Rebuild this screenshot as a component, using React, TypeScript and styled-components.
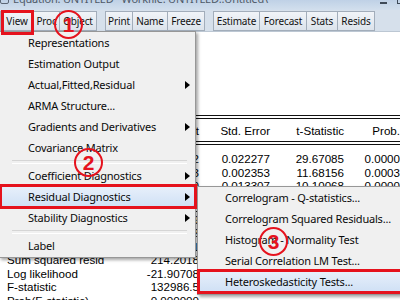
import React from "react";
import styled, { createGlobalStyle, css } from "styled-components";

const RED = "#e5121d";

const GlobalStyle = createGlobalStyle`
  html, body { margin: 0; padding: 0; background: #ffffff; }
  body { width: 400px; height: 300px; overflow: hidden; }
  * { box-sizing: border-box; }
`;

const Screen = styled.div`
  position: relative;
  width: 400px;
  height: 300px;
  overflow: hidden;
  display: flex;
  flex-direction: column;
  background: #ffffff;
`;

/* ---------- title bar ---------- */
const TitleBar = styled.div`
  flex: none;
  height: 10px;
  overflow: hidden;
  display: flex;
  align-items: flex-start;
  background: linear-gradient(#bfd1e6, #d2dfed);
  font-family: "Noto Sans", sans-serif;
  font-size: 11px;
  letter-spacing: -0.2px;
  color: #4f5a68;
`;

const TitleIcon = styled.span`
  flex: none;
  width: 9px;
  height: 12px;
  margin-top: -8px;
  border: 1px solid #5b6675;
  border-radius: 2px;
`;

const TitleText = styled.span`
  margin: -9px 0 0 4px;
  line-height: 16px;
  white-space: pre;
`;

const TitleControls = styled.div`
  margin-left: auto;
  display: flex;
  gap: 10px;
  align-items: flex-start;
`;

const MinGlyph = styled.span`
  width: 7px;
  height: 2px;
  margin-top: 2px;
  background: #3e4a58;
`;

const MaxGlyph = styled.span`
  width: 8px;
  height: 10px;
  margin-top: -6px;
  margin-right: -5px;
  border: 1px solid #3e4a58;
  border-top-width: 2px;
`;

/* ---------- toolbar ---------- */
const Toolbar = styled.div`
  flex: none;
  height: 22px;
  display: flex;
  align-items: center;
  background: #d6e0eb;
  border-bottom: 1px solid #bcc7d3;
  font-family: "Noto Sans", sans-serif;
  font-size: 10px;
  letter-spacing: -0.15px;
  color: #111;
`;

const ButtonGroup = styled.div`
  display: flex;
  & + & {
    margin-left: 8px;
  }
`;

const ToolButton = styled.div<{ $w: number; $marked?: boolean }>`
  position: relative;
  width: ${(p) => p.$w}px;
  height: 20px;
  display: flex;
  align-items: center;
  justify-content: center;
  white-space: nowrap;
  background: linear-gradient(#f1f4f8, #dce3eb);
  border: 1px solid #a2adba;
  & + & {
    margin-left: -1px;
  }
  ${(p) =>
    p.$marked &&
    css`
      &::after {
        content: "";
        position: absolute;
        left: 0;
        right: -1px;
        top: -2px;
        bottom: -5px;
        border: 3px solid ${RED};
        z-index: 10;
      }
    `}
`;

/* ---------- output ---------- */
const Output = styled.div`
  flex: 1;
  padding: 8px 0 0 7px;
  font-family: "Liberation Sans", Arial, sans-serif;
  font-size: 11.6px;
  line-height: 13.5px;
  color: #000;
`;

const InfoLine = styled.div`
  white-space: pre;
`;

const DoubleRule = styled.div<{ $mt: number; $mb: number }>`
  height: 4px;
  margin: ${(p) => p.$mt}px 0 ${(p) => p.$mb}px -4px;
  border-top: 1px solid #111;
  border-bottom: 1px solid #111;
`;

const TableRow = styled.div`
  display: grid;
  grid-template-columns: 120px 72px 71px 74px 56px;
  white-space: nowrap;
`;

const StatsRow = styled.div`
  display: grid;
  grid-template-columns: 120px 72px 150px 57px;
  white-space: nowrap;
`;

const Cell = styled.span<{ $right?: boolean; $pl?: number }>`
  text-align: ${(p) => (p.$right ? "right" : "left")};
  padding-left: ${(p) => p.$pl ?? 0}px;
`;

/* ---------- menus ---------- */
const Menu = styled.div<{ $left: number; $top: number; $width: number; $z: number; $pb: number }>`
  position: absolute;
  left: ${(p) => p.$left}px;
  top: ${(p) => p.$top}px;
  width: ${(p) => p.$width}px;
  z-index: ${(p) => p.$z};
  padding-bottom: ${(p) => p.$pb}px;
  background: #f0f0f0;
  border: 1px solid #979797;
  box-shadow: 2px 2px 3px rgba(0, 0, 0, 0.35);
  font-family: "Noto Sans", sans-serif;
  font-size: 11px;
  letter-spacing: -0.2px;
  color: #0a0a0a;
`;

const MenuItem = styled.div<{ $pl: number; $active?: boolean; $marked?: boolean }>`
  position: relative;
  height: 21px;
  display: flex;
  align-items: center;
  padding-left: ${(p) => p.$pl}px;
  white-space: nowrap;
  ${(p) =>
    p.$active &&
    css`
      background: linear-gradient(#e8f0fb, #cfe0f5);
      box-shadow: inset 0 0 0 1px #a9c8ee;
      border-radius: 3px;
    `}
  ${(p) =>
    p.$marked &&
    css`
      &::after {
        content: "";
        position: absolute;
        inset: -2px -2px -2px -1px;
        border: 3px solid ${RED};
      }
    `}
`;

const ItemLabel = styled.span`
  flex: 1;
`;

const SubArrow = styled.span`
  flex: none;
  width: 0;
  height: 0;
  margin-right: 5px;
  border-top: 4px solid transparent;
  border-bottom: 4px solid transparent;
  border-left: 5px solid #000;
`;

const Separator = styled.div`
  height: 7px;
  display: flex;
  align-items: center;
  padding: 0 8px 0 12px;
  &::before {
    content: "";
    flex: 1;
    height: 2px;
    border-top: 1px solid #d5d5d5;
    border-bottom: 1px solid #ffffff;
  }
`;

/* ---------- callouts ---------- */
const Callout = styled.div<{ $x: number; $y: number }>`
  position: absolute;
  left: ${(p) => p.$x}px;
  top: ${(p) => p.$y}px;
  width: 29px;
  height: 29px;
  z-index: 20;
  display: flex;
  align-items: center;
  justify-content: center;
  border: 2.5px solid ${RED};
  border-radius: 50%;
  color: ${RED};
  font-family: "Liberation Sans", Arial, sans-serif;
  font-weight: 700;
  font-size: 21px;
  line-height: 1;
`;

type MainEntry = { label: string; sub?: boolean; active?: boolean } | "sep";

const mainMenu: MainEntry[] = [
  { label: "Representations" },
  { label: "Estimation Output" },
  { label: "Actual,Fitted,Residual", sub: true },
  { label: "ARMA Structure..." },
  { label: "Gradients and Derivatives", sub: true },
  { label: "Covariance Matrix" },
  "sep",
  { label: "Coefficient Diagnostics", sub: true },
  { label: "Residual Diagnostics", sub: true, active: true },
  { label: "Stability Diagnostics", sub: true },
  "sep",
  { label: "Label" },
];

const subMenu = [
  "Correlogram - Q-statistics...",
  "Correlogram Squared Residuals...",
  "Histogram - Normality Test",
  "Serial Correlation LM Test...",
  "Heteroskedasticity Tests...",
];

const buttons = [
  [
    { t: "View", w: 34, marked: true },
    { t: "Proc", w: 27 },
    { t: "Object", w: 38 },
  ],
  [
    { t: "Print", w: 28 },
    { t: "Name", w: 36 },
    { t: "Freeze", w: 38 },
  ],
  [
    { t: "Estimate", w: 47 },
    { t: "Forecast", w: 48 },
    { t: "Stats", w: 32 },
    { t: "Resids", w: 38 },
  ],
];

const info = [
  "Dependent Variable: Y",
  "Method: Least Squares",
  "Date: 06/14/17   Time: 10:32",
  "Sample: 1 12",
  "Included observations: 12",
];

const coefs = [
  ["C", "0.661052", "0.022277", "29.67085", "0.0000"],
  ["X1", "0.027483", "0.002353", "11.68156", "0.0003"],
  ["X2", "0.134410", "0.013307", "10.10068", "0.0000"],
  ["X3", "-0.001206", "0.000398", "-3.031512", "0.0164"],
];

const stats = [
  ["R-squared", "0.999979", "Mean dependent var", "2015.667"],
  ["Adjusted R-squared", "0.999972", "S.D. dependent var", "1089.405"],
  ["S.E. of regression", "5.174561", "Akaike info criterion", "4.317847"],
  ["Sum squared resid", "214.2018", "Schwarz criterion", "4.479482"],
  ["Log likelihood", "-21.90708", "Hannan-Quinn criter.", "4.258006"],
  ["F-statistic", "132986.5", "Durbin-Watson stat", "1.826341"],
  ["Prob(F-statistic)", "0.000000", "", ""],
];

export default function App() {
  return (
    <>
      <GlobalStyle />
      <Screen>
        <TitleBar>
          <TitleIcon />
          <TitleText>{"Equation: UNTITLED   Workfile: UNTITLED::Untitled\\"}</TitleText>
          <TitleControls>
            <MinGlyph />
            <MaxGlyph />
          </TitleControls>
        </TitleBar>

        <Toolbar>
          {buttons.map((group, gi) => (
            <ButtonGroup key={gi}>
              {group.map((b) => (
                <ToolButton key={b.t} $w={b.w} $marked={"marked" in b && b.marked}>
                  {b.t}
                </ToolButton>
              ))}
            </ButtonGroup>
          ))}
        </Toolbar>

        <Output>
          {info.map((l) => (
            <InfoLine key={l}>{l}</InfoLine>
          ))}
          <DoubleRule $mt={7.5} $mb={5} />
          <TableRow>
            <Cell>Variable</Cell>
            <Cell $right>Coefficient</Cell>
            <Cell $right>Std. Error</Cell>
            <Cell $right>t-Statistic</Cell>
            <Cell $right>Prob.</Cell>
          </TableRow>
          <DoubleRule $mt={3.5} $mb={7.25} />
          {coefs.map((r) => (
            <TableRow key={r[0]}>
              <Cell>{r[0]}</Cell>
              <Cell $right>{r[1]}</Cell>
              <Cell $right>{r[2]}</Cell>
              <Cell $right>{r[3]}</Cell>
              <Cell $right>{r[4]}</Cell>
            </TableRow>
          ))}
          <DoubleRule $mt={1.25} $mb={1.25} />
          {stats.map((r) => (
            <StatsRow key={r[0]}>
              <Cell>{r[0]}</Cell>
              <Cell $right>{r[1]}</Cell>
              <Cell $pl={24}>{r[2]}</Cell>
              <Cell $right>{r[3]}</Cell>
            </StatsRow>
          ))}
        </Output>

        <Menu $left={-1} $top={31} $width={197} $z={5} $pb={1}>
          {mainMenu.map((e, i) =>
            e === "sep" ? (
              <Separator key={i} />
            ) : (
              <MenuItem key={e.label} $pl={28} $active={e.active} $marked={e.active}>
                <ItemLabel>{e.label}</ItemLabel>
                {e.sub && <SubArrow />}
              </MenuItem>
            )
          )}
        </Menu>

        <Menu $left={197} $top={186} $width={215} $z={6} $pb={2}>
          {subMenu.map((l, i) => {
            const last = i === subMenu.length - 1;
            return (
              <MenuItem key={l} $pl={27} $active={last} $marked={last}>
                <ItemLabel>{l}</ItemLabel>
              </MenuItem>
            );
          })}
        </Menu>

        <Callout $x={54} $y={10}>1</Callout>
        <Callout $x={74} $y={148}>2</Callout>
        <Callout $x={259} $y={227}>3</Callout>
      </Screen>
    </>
  );
}
